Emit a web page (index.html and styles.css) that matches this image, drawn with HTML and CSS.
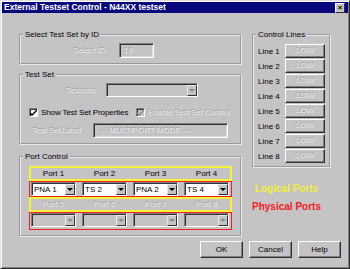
FILE: index.html
```html
<!DOCTYPE html>
<html>
<head>
    <meta charset="UTF-8">
    <title>External Testset Control</title>
    <link rel="stylesheet" href="styles.css">
</head>
<body>
<div class="window">
    <div class="titlebar">
        <span class="title">External Testset Control - N44XX testset</span>
        <span class="close">&#215;</span>
    </div>
    <div class="client">
        <div class="left">
            <!-- select by id -->
            <fieldset class="group g-select">
                <legend>Select Test Set by ID</legend>
                <div class="row row-id">
                    <span class="lbl lbl-id dis">Select ID:</span>
                    <span class="edit edit-id dis">18</span>
                </div>
            </fieldset>
            <!-- test set -->
            <fieldset class="group g-testset">
                <legend>Test Set</legend>
                <div class="row row-ts">
                    <span class="lbl lbl-ts dis">Testsets:</span>
                    <span class="combo combo-ts off"><span class="val"></span><span class="arrow"></span></span>
                </div>
                <div class="row row-check">
                    <span class="check"><svg width="7" height="7" viewBox="0 0 7 7"><path d="M0 3 L2 5 L7 0 L7 2 L2 7 L0 5 Z" fill="#000"/></svg></span>
                    <span class="check-text">Show Test Set Properties</span>
                    <span class="check check-off"><svg width="7" height="7" viewBox="0 0 7 7"><path d="M0 3 L2 5 L7 0 L7 2 L2 7 L0 5 Z" fill="#8a8a8a"/></svg></span>
                    <span class="check-text dis">Enable Test Set Control</span>
                </div>
                <div class="row row-label">
                    <span class="lbl lbl-tsl dis">Test Set Label</span>
                    <span class="edit edit-tsl dis">--- MULTIPORT MODE ---</span>
                </div>
            </fieldset>
            <!-- ports -->
            <fieldset class="group g-ports">
                <legend>Port Control</legend>
                <div class="ports">
                    <div class="prow names">
                        <span>Port 1</span><span>Port 2</span><span>Port 3</span><span>Port 4</span>
                    </div>
                    <div class="prow combos logical-c">
                        <span class="combo"><span class="val">PNA 1</span><span class="arrow"></span></span>
                        <span class="combo"><span class="val">TS 2</span><span class="arrow"></span></span>
                        <span class="combo"><span class="val">PNA 2</span><span class="arrow"></span></span>
                        <span class="combo"><span class="val">TS 4</span><span class="arrow"></span></span>
                    </div>
                    <div class="prow names dis">
                        <span>Port 5</span><span>Port 6</span><span>Port 7</span><span>Port 8</span>
                    </div>
                    <div class="prow combos physical-c">
                        <span class="combo off"><span class="val"></span><span class="arrow"></span></span>
                        <span class="combo off"><span class="val"></span><span class="arrow"></span></span>
                        <span class="combo off"><span class="val"></span><span class="arrow"></span></span>
                        <span class="combo off"><span class="val"></span><span class="arrow"></span></span>
                    </div>
                </div>
            </fieldset>
        </div>
        <div class="right">
            <fieldset class="group g-lines">
                <legend>Control Lines</legend>
                <div class="lines">
                    <span class="line-name">Line 1</span><span class="btn low dis">LOW</span>
                    <span class="line-name">Line 2</span><span class="btn low dis">LOW</span>
                    <span class="line-name">Line 3</span><span class="btn low dis">LOW</span>
                    <span class="line-name">Line 4</span><span class="btn low dis">LOW</span>
                    <span class="line-name">Line 5</span><span class="btn low dis">LOW</span>
                    <span class="line-name">Line 6</span><span class="btn low dis">LOW</span>
                    <span class="line-name">Line 7</span><span class="btn low dis">LOW</span>
                    <span class="line-name">Line 8</span><span class="btn low dis">LOW</span>
                </div>
            </fieldset>
            <div class="key key-logical">Logical Ports</div>
            <div class="key key-physical">Physical Ports</div>
        </div>
    </div>
    <div class="buttons">
        <span class="btn push">OK</span>
        <span class="btn push">Cancel</span>
        <span class="btn push">Help</span>
    </div>
</div>
</body>
</html>
```
FILE: styles.css
```css
body {
    margin: 0;
    background-color: #c5c3c5;
    font-family: "Liberation Sans", Arial, sans-serif;
    font-size: 8px;
    color: #000;
}
.window {
    width: 350px;
    height: 269px;
    box-sizing: border-box;
    border: 1px solid;
    border-color: #e0e0e0 #303030 #303030 #e0e0e0;
    box-shadow: inset 1px 1px 0 #fff, inset -1px -1px 0 #808080;
    padding: 1px;
    background-color: #c5c3c5;
}
.titlebar {
    height: 11px;
    background-color: #08087b;
    display: flex;
    align-items: center;
    justify-content: space-between;
    padding: 0 3px 0 2px;
}
.title {
    color: #fff;
    font-weight: bold;
    font-size: 8.5px;
    line-height: 11px;
}
.close {
    width: 8px;
    height: 8px;
    background-color: #c5c3c5;
    border: 1px solid;
    border-color: #fff #303030 #303030 #fff;
    font-size: 8px;
    line-height: 8px;
    text-align: center;
    font-weight: bold;
}
.client {
    display: grid;
    grid-template-columns: 223px 79px;
    column-gap: 10px;
    padding: 17px 0 0 17px;
}
.left, .right {
    display: flex;
    flex-direction: column;
}

/* group boxes */
.group {
    margin: 0;
    padding: 0;
    border: 2px groove #ececec;
    min-width: 0;
}
.group legend {
    padding: 0 2px;
    margin-left: 2px;
    line-height: 10px;
    font-size: 8px;
}
.g-select { height: 35px; box-sizing: border-box; }
.g-testset { height: 75px; box-sizing: border-box; margin-top: 5px; }
.g-ports { height: 85px; box-sizing: border-box; margin-top: 7px; }
.g-lines { height: 138px; box-sizing: border-box; }

.row {
    display: flex;
    align-items: center;
}
.dis {
    color: #eeeeee;
    text-shadow: -0.6px -0.6px 0 #9a9a9a;
}
.lbl {
    display: block;
    white-space: nowrap;
}

/* fields */
.edit {
    box-sizing: border-box;
    height: 15px;
    border: 1px solid;
    border-color: #808080 #fff #fff #808080;
    box-shadow: inset 1px 1px 0 #303030, inset -1px -1px 0 #dcdcdc;
    padding: 0 4px;
    line-height: 13px;
    white-space: nowrap;
    overflow: hidden;
}
.row-id { padding-top: 3px; }
.lbl-id { width: 87px; text-align: right; }
.edit-id { width: 35px; margin-left: 11px; }

.row-ts { padding-top: 3px; }
.lbl-ts { width: 77px; text-align: right; }
.combo-ts { width: 92px; margin-left: 8px; }

.row-check { margin-top: 10px; height: 10px; }
.check {
    box-sizing: border-box;
    width: 9px;
    height: 9px;
    background-color: #fff;
    border: 1px solid;
    border-color: #808080 #fff #fff #808080;
    box-shadow: inset 1px 1px 0 #303030;
    display: flex;
    align-items: center;
    justify-content: center;
    margin-left: 8px;
}
.check-off {
    background-color: #c5c3c5;
    margin-left: 8px;
}
.check-text {
    margin-left: 3px;
    white-space: nowrap;
    letter-spacing: -0.1px;
}

.row-label { margin-top: 6px; }
.lbl-tsl { width: 50px; margin-left: 12px; letter-spacing: -0.2px; }
.edit-tsl { width: 135px; margin-left: 10px; padding-left: 5px; }

/* combo boxes */
.combo {
    box-sizing: border-box;
    height: 14px;
    display: flex;
    background-color: #fff;
    border: 1px solid;
    border-color: #808080 #fff #fff #808080;
    box-shadow: inset 1px 1px 0 #303030;
    padding: 1px 0 0 1px;
}
.combo .val {
    flex: 1;
    line-height: 11px;
    padding-left: 1px;
    white-space: nowrap;
}
.combo .arrow {
    width: 10px;
    box-sizing: border-box;
    background-color: #c5c3c5;
    border: 1px solid;
    border-color: #e8e8e8 #303030 #303030 #e8e8e8;
    display: flex;
    align-items: center;
    justify-content: center;
}
.combo .arrow::after {
    content: "";
    border-left: 3px solid transparent;
    border-right: 3px solid transparent;
    border-top: 3px solid #000;
}
.combo.off { background-color: #c5c3c5; }
.combo.off .arrow::after { border-top-color: #8a8a8a; }

/* port control */
.ports {
    margin: 4px 0 0 8px;
    width: 203px;
}
.prow {
    display: grid;
    grid-template-columns: repeat(4, 45px);
    column-gap: 6px;
    box-sizing: border-box;
}
.names {
    height: 15px;
    border: 2px solid #f2f23a;
    line-height: 11px;
    text-align: center;
}
.combos {
    border: 1px solid #f02020;
    padding: 0 0 0 1px;
}
.logical-c { height: 16px; }
.physical-c { height: 18px; padding-bottom: 2px; }

/* control lines */
.lines {
    display: grid;
    grid-template-columns: 27px 40px;
    grid-auto-rows: 14px;
    row-gap: 1px;
    padding: 4px 0 0 4px;
    align-items: center;
}
.btn {
    box-sizing: border-box;
    background-color: #c5c3c5;
    border: 1px solid;
    border-color: #fff #303030 #303030 #fff;
    box-shadow: inset -1px -1px 0 #808080;
    text-align: center;
}
.low {
    height: 14px;
    line-height: 12px;
}
.key {
    font-weight: bold;
    font-size: 10px;
    line-height: 12px;
    text-align: center;
    padding-right: 10px;
}
.key-logical { color: #f0f03a; margin-top: 15px; }
.key-physical { color: #f02020; margin-top: 6px; }

/* bottom buttons */
.buttons {
    display: flex;
    justify-content: flex-end;
    column-gap: 6px;
    padding-right: 7px;
    margin-top: 4px;
}
.push {
    width: 43px;
    height: 17px;
    line-height: 15px;
}
```
